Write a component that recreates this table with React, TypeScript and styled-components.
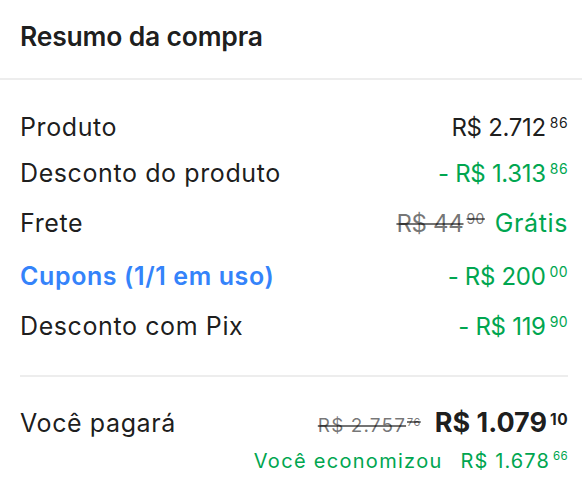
import React from "react";
import styled, { createGlobalStyle } from "styled-components";

const Global = createGlobalStyle`
  html, body { margin: 0; padding: 0; background: #fff; }
  body { font-family: Inter, "Open Sans", Arial, sans-serif; color: rgba(0,0,0,0.9); }
`;

const green = "#00a650";
const blue = "#3483fa";
const muted = "rgba(0,0,0,0.55)";

const Card = styled.div`
  width: 582px;
  background: #fff;
`;

const Header = styled.div`
  height: 78px;
  padding: 0 20px;
  border-bottom: 2px solid #ededed;
  display: flex;
  align-items: flex-start;
`;

const Title = styled.h2`
  margin: 20px 0 0;
  font-size: 26.5px;
  line-height: 32px;
  font-weight: 600;
  letter-spacing: -0.2px;
`;

const Body = styled.div`
  padding: 32px 14px 0 20px;
  display: flex;
  flex-direction: column;
`;

const Row = styled.div<{ $top?: number }>`
  display: flex;
  justify-content: space-between;
  align-items: baseline;
  height: 30px;
  margin-top: ${(p) => p.$top ?? 0}px;
`;

const Label = styled.span<{ $link?: boolean }>`
  font-size: 25px;
  line-height: 30px;
  letter-spacing: 0.6px;
  font-weight: ${(p) => (p.$link ? 600 : 400)};
  color: ${(p) => (p.$link ? blue : "rgba(0,0,0,0.9)")};
`;

const Values = styled.div<{ $gap?: number }>`
  display: inline-flex;
  align-items: baseline;
  gap: ${(p) => p.$gap ?? 10}px;
`;

const Price = styled.span<{
  $color?: string;
  $struck?: boolean;
  $size?: number;
  $weight?: number;
  $spacing?: number;
}>`
  display: inline-flex;
  align-items: flex-start;
  color: ${(p) => p.$color ?? "rgba(0,0,0,0.9)"};
  text-decoration: ${(p) => (p.$struck ? "line-through" : "none")};
  text-decoration-thickness: 1.5px;
  font-size: ${(p) => p.$size ?? 24}px;
  font-weight: ${(p) => p.$weight ?? 400};
  line-height: ${(p) => (p.$size && p.$size < 22 ? 24 : 30)}px;
  letter-spacing: ${(p) => p.$spacing ?? -0.3}px;
`;

const Cents = styled.span<{ $size?: number; $pad?: number; $gap?: number }>`
  font-size: ${(p) => p.$size ?? 14}px;
  line-height: ${(p) => p.$size ?? 14}px;
  padding-top: ${(p) => p.$pad ?? 3}px;
  margin-left: ${(p) => p.$gap ?? 4}px;
  letter-spacing: 0.4px;
`;

const Free = styled.span`
  color: ${green};
  font-size: 25px;
  line-height: 30px;
  letter-spacing: 0.6px;
`;

const Divider = styled.hr`
  margin: 34px 0 0;
  border: 0;
  height: 2px;
  background: #ededed;
`;

const Saving = styled.div`
  display: flex;
  justify-content: flex-end;
  align-items: baseline;
  gap: 18px;
  color: ${green};
  margin-top: 11px;
`;

const SavingText = styled.span`
  font-size: 20px;
  line-height: 24px;
  letter-spacing: 1.3px;
`;

export default function App() {
  return (
    <Card>
      <Global />
      <Header>
        <Title>Resumo da compra</Title>
      </Header>
      <Body>
        <Row>
          <Label>Produto</Label>
          <Price>
            R$ 2.712<Cents>86</Cents>
          </Price>
        </Row>
        <Row $top={16}>
          <Label>Desconto do produto</Label>
          <Price $color={green}>
            - R$ 1.313<Cents>86</Cents>
          </Price>
        </Row>
        <Row $top={20}>
          <Label>Frete</Label>
          <Values>
            <Price $struck $color={muted}>
              R$ 44<Cents $gap={3}>90</Cents>
            </Price>
            <Free>Grátis</Free>
          </Values>
        </Row>
        <Row $top={23}>
          <Label $link>Cupons (1/1 em uso)</Label>
          <Price $color={green}>
            - R$ 200<Cents>00</Cents>
          </Price>
        </Row>
        <Row $top={20}>
          <Label>Desconto com Pix</Label>
          <Price $color={green}>
            - R$ 119<Cents>90</Cents>
          </Price>
        </Row>
        <Divider />
        <Row $top={31}>
          <Label>Você pagará</Label>
          <Values $gap={14}>
            <Price $struck $color={muted} $size={19} $spacing={1.1}>
              R$ 2.757<Cents $size={11} $pad={3} $gap={1}>76</Cents>
            </Price>
            <Price $size={27} $weight={700} $spacing={0}>
              R$ 1.079<Cents $size={15.5} $pad={4} $gap={3}>10</Cents>
            </Price>
          </Values>
        </Row>
        <Saving>
          <SavingText>Você economizou</SavingText>
          <Price $color={green} $size={20} $spacing={1.1}>
            R$ 1.678<Cents $size={11.5} $pad={2} $gap={3}>66</Cents>
          </Price>
        </Saving>
      </Body>
    </Card>
  );
}
